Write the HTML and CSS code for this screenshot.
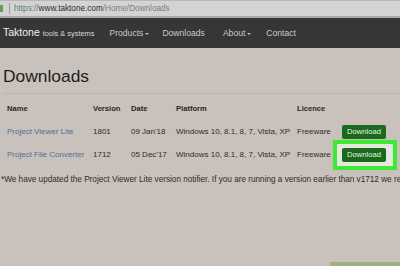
FILE: index.html
```html
<!DOCTYPE html>
<html>
<head>
<meta charset="utf-8">
<link rel="stylesheet" href="styles.css">
</head>
<body>
<div class="addr">
  <span class="lock"></span>
  <span class="sep"></span>
  <span class="url"><span class="proto">https://</span><span class="host">www.taktone.com</span><span class="path">/Home/Downloads</span></span>
</div>
<nav class="nav">
  <div class="brand">Taktone <small>tools &amp; systems</small></div>
  <ul class="menu">
    <li class="m-products">Products<span class="caret"></span></li>
    <li class="m-downloads">Downloads</li>
    <li class="m-about">About<span class="caret"></span></li>
    <li class="m-contact">Contact</li>
  </ul>
</nav>
<main class="main">
  <h1 class="title">Downloads</h1>
  <div class="rule"></div>
  <div class="table">
    <div class="th">Name</div><div class="th">Version</div><div class="th">Date</div><div class="th">Platform</div><div class="th">Licence</div><div class="th"></div>
    <div class="td"><a class="link">Project Viewer Lite</a></div><div class="td">1801</div><div class="td">09 Jan'18</div><div class="td">Windows 10, 8.1, 8, 7, Vista, XP</div><div class="td">Freeware</div><div class="td"><a class="btn">Download</a></div>
    <div class="td"><a class="link">Project File Converter</a></div><div class="td">1712</div><div class="td">05 Dec'17</div><div class="td">Windows 10, 8.1, 8, 7, Vista, XP</div><div class="td">Freeware</div><div class="td"><span class="hl"><a class="btn">Download</a></span></div>
  </div>
  <p class="note">*We have updated the Project Viewer Lite version notifier. If you are running a version earlier than v1712 we recommend updating.</p>
</main>
<div class="strip"></div>
</body>
</html>
```
FILE: styles.css
```css
html, body {
  margin: 0;
  padding: 0;
}
body {
  width: 400px;
  height: 266px;
  overflow: hidden;
  background: #c9c1bb;
  font-family: "Liberation Sans", Arial, sans-serif;
  color: #2f2c2a;
  position: relative;
}
.addr {
  height: 15px;
  background: #d3d3d3;
  border-top: 1px solid #b8b8b8;
  border-bottom: 2px solid #a9a9a9;
  display: flex;
  align-items: center;
  font-size: 8.2px;
}
.lock {
  width: 3px;
  height: 7px;
  background: #6c9a5c;
}
.sep {
  width: 1px;
  height: 11px;
  background: #9a9a9a;
  margin-left: 6px;
  margin-right: 4px;
}
.proto { color: #5f7f6a; }
.host { color: #2a2a2a; }
.path { color: #7c7c7c; }
.nav {
  height: 30px;
  background: #363636;
  display: flex;
  align-items: center;
  color: #c9c9c9;
}
.brand {
  color: #f2f2f2;
  font-size: 10.5px;
  margin-left: 3px;
  padding-bottom: 2px;
}
.brand small {
  font-size: 7.4px;
  color: #d9d9d9;
}
.menu {
  list-style: none;
  margin: 0;
  padding: 0;
  display: flex;
  font-size: 8.6px;
}
.menu li { display: flex; align-items: center; }
.m-products { margin-left: 15px; }
.m-downloads { margin-left: 13px; }
.m-about { margin-left: 18px; }
.m-contact { margin-left: 15px; }
.caret {
  width: 0;
  height: 0;
  border-left: 2px solid transparent;
  border-right: 2px solid transparent;
  border-top: 2px solid #bdbdbd;
  margin-left: 2px;
  margin-top: 1px;
}
.main {
  padding: 0 0 0 3px;
}
.title {
  margin: 0;
  padding-top: 18px;
  font-size: 17.4px;
  font-weight: normal;
  color: #1f1d1c;
  line-height: 20px;
}
.rule {
  height: 1px;
  background: #bcb4ae;
  margin-top: 7px;
}
.table {
  display: grid;
  grid-template-columns: 86px 38px 45px 121px 45px 60px;
  grid-auto-rows: 23px;
  margin-top: 3px;
  padding-left: 4px;
  font-size: 8px;
  white-space: nowrap;
}
.th, .td {
  display: flex;
  align-items: center;
}
.th {
  font-weight: bold;
  font-size: 7.6px;
  color: #2a2827;
}
.link { color: #4f6f99; }
.btn {
  display: inline-block;
  background: #1a6a1c;
  color: #e8f0e6;
  font-size: 7.6px;
  line-height: 14px;
  padding: 0 5px;
  border-radius: 2px;
  width: 34px;
  text-align: center;
}
.hl {
  position: relative;
  z-index: 0;
  display: inline-block;
}
.hl::before {
  content: "";
  position: absolute;
  left: -9px;
  right: -11px;
  top: -8px;
  bottom: -8px;
  border: 4px solid #3fe833;
  background: #e4e8e0;
  z-index: -1;
}
.note {
  margin: 9px 0 0 -2px;
  font-size: 8.2px;
  white-space: nowrap;
  color: #2f2c2a;
}
.strip {
  position: absolute;
  right: 0;
  bottom: 0;
  width: 70px;
  height: 4px;
  background: #9fb089;
}
```
